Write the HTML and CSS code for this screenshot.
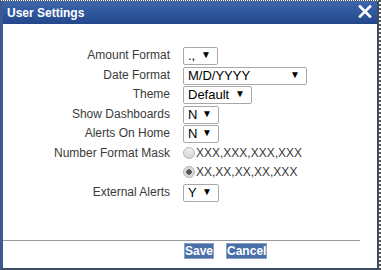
FILE: index.html
```html
<!DOCTYPE html>
<html lang="en">
<head>
    <meta charset="UTF-8">
    <title>User Settings</title>
    <link rel="stylesheet" href="styles.css">
</head>
<body>
    <div class="frame">
        <div class="dialog">
            <div class="titlebar">
                <span class="title">User Settings</span>
                <svg class="close" width="14" height="13" viewBox="0 0 14 13">
                    <path d="M2 1.5 L12 11.5 M12 1.5 L2 11.5" stroke="#fff" stroke-width="2.6" stroke-linecap="square"/>
                </svg>
            </div>
            <form class="settings">
                <label class="field-label" for="AmountFormat">Amount Format</label>
                <span class="pick pick-amount">
                    <select id="AmountFormat"><option>.,</option><option>,.</option></select>
                </span>

                <label class="field-label" for="DateFormat">Date Format</label>
                <span class="pick pick-date">
                    <select id="DateFormat"><option>M/D/YYYY</option><option>D/M/YYYY</option></select>
                </span>

                <label class="field-label" for="Theme">Theme</label>
                <span class="pick pick-theme">
                    <select id="Theme"><option>Default</option></select>
                </span>

                <label class="field-label" for="ShowDashboards">Show Dashboards</label>
                <span class="pick pick-yn">
                    <select id="ShowDashboards"><option>N</option><option>Y</option></select>
                </span>

                <label class="field-label" for="AlertsOnHome">Alerts On Home</label>
                <span class="pick pick-yn">
                    <select id="AlertsOnHome"><option>N</option><option>Y</option></select>
                </span>

                <span class="field-label">Number Format Mask</span>
                <label class="radio"><input type="radio" name="mask" value="intl">XXX,XXX,XXX,XXX</label>
                <span></span>
                <label class="radio"><input type="radio" name="mask" value="lakh" checked>XX,XX,XX,XX,XXX</label>

                <label class="field-label" for="ExternalAlerts">External Alerts</label>
                <span class="pick pick-yn">
                    <select id="ExternalAlerts"><option>Y</option><option>N</option></select>
                </span>
            </form>
            <div class="footer">
                <button type="button">Save</button>
                <button type="button">Cancel</button>
            </div>
        </div>
    </div>
</body>
</html>
```

FILE: styles.css
```css
body {
    margin: 0;
    padding: 0;
    background-color: #fff;
    font-family: 'Liberation Sans', Arial, sans-serif;
}

.frame {
    box-sizing: border-box;
    width: 381px;
    height: 270px;
    border-top: 1px dotted #555;
    border-right: 2px dotted #555;
}

.dialog {
    box-sizing: border-box;
    height: 100%;
    display: flex;
    flex-direction: column;
    border-left: 3px solid #3b5a91;
    border-right: 2px solid #3d4d66;
    border-bottom: 2px solid #3d4d66;
    background-color: #fff;
}

.titlebar {
    height: 23px;
    display: flex;
    align-items: center;
    justify-content: space-between;
    padding: 0 5px 0 4px;
    background: linear-gradient(#3e67ad, #22478b);
}

.title {
    color: #fff;
    font-size: 12px;
    font-weight: bold;
}

.close {
    display: block;
    margin-top: -2px;
}

.settings {
    flex: 1;
    display: grid;
    grid-template-columns: 167px auto;
    grid-auto-rows: 18px;
    column-gap: 13px;
    row-gap: 1.5px;
    align-content: start;
    justify-items: start;
    align-items: center;
    padding-top: 22px;
    margin: 0;
}

.field-label {
    justify-self: end;
    font-size: 12px;
    color: #3a3a3a;
}

.pick {
    position: relative;
    display: inline-block;
    height: 18px;
}

.pick select {
    appearance: none;
    -webkit-appearance: none;
    box-sizing: border-box;
    height: 18px;
    margin: 0;
    padding: 0 0 0 4px;
    border: 1px solid #a9a9a9;
    border-radius: 2px;
    background-color: #fff;
    color: #000;
    font-family: 'Liberation Sans', Arial, sans-serif;
    font-size: 13px;
    line-height: 16px;
}

.pick::after {
    content: "\25BC";
    position: absolute;
    top: 3px;
    right: 7px;
    font-size: 10px;
    line-height: 12px;
    color: #000;
    pointer-events: none;
}

.pick-amount select { width: 35px; }
.pick-date select { width: 124px; }
.pick-theme select { width: 69px; }
.pick-yn select { width: 36px; }

.radio {
    display: flex;
    align-items: center;
    font-size: 12px;
    color: #3a3a3a;
}

.radio input {
    appearance: none;
    -webkit-appearance: none;
    width: 12px;
    height: 12px;
    margin: 0 1px 0 0;
    border: 1px solid #b4b4b4;
    border-radius: 50%;
    background: linear-gradient(#eeeeee, #d6d6d6);
}

.radio input:checked {
    background: radial-gradient(circle, #555 0, #555 2.5px, #dcdcdc 3px);
}

.footer {
    margin-right: 17px;
    border-top: 1px solid #9a9a9a;
    padding: 2px 0 9px 181px;
    display: flex;
    gap: 12px;
}

.footer button {
    height: 16px;
    padding: 0;
    border: 1px solid #8aa0c6;
    background-color: #4a6ea8;
    color: #fff;
    font-family: 'Liberation Sans', Arial, sans-serif;
    font-size: 12px;
    font-weight: bold;
    line-height: 14px;
    cursor: pointer;
}
```
